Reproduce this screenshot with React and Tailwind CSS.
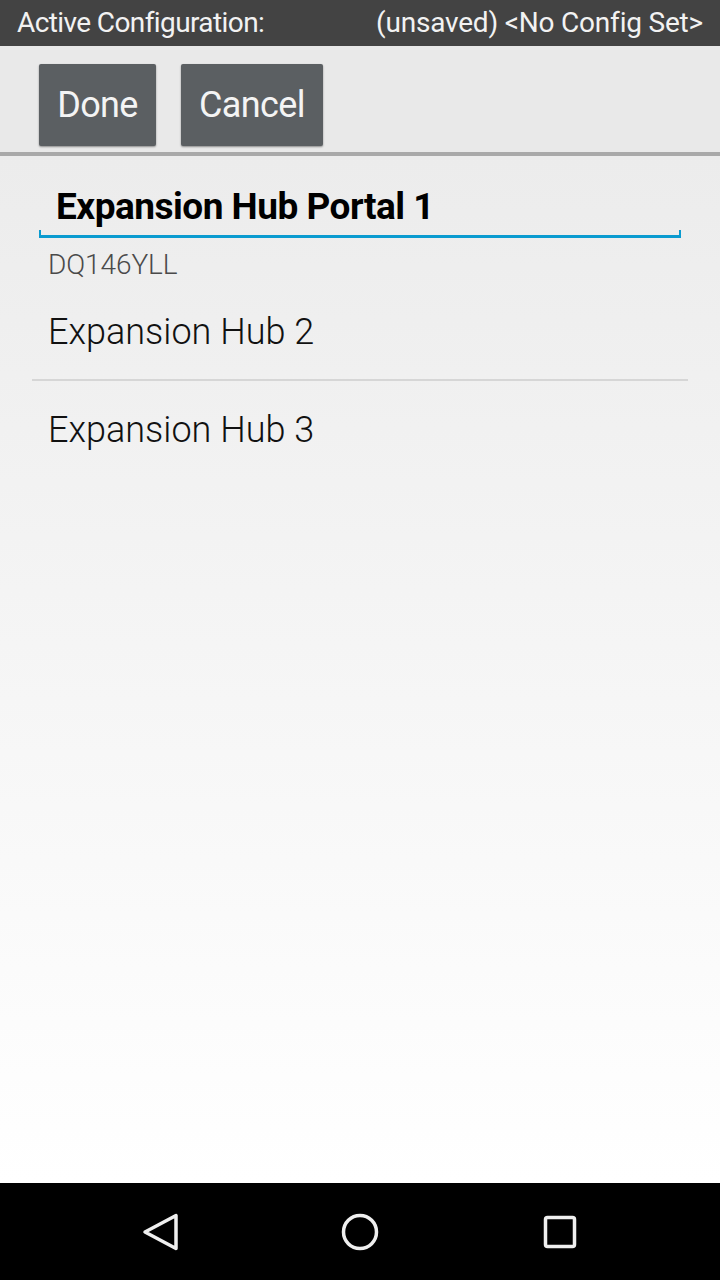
export default function App() {
  const font = { fontFamily: 'Roboto, "Noto Sans", sans-serif' };
  return (
    <div className="w-[720px] h-[1280px] flex flex-col overflow-hidden" style={font}>
      <div className="h-[46px] bg-[#434343] flex items-center justify-between pl-[17px] pr-[17px] text-[#f2f2f2] text-[28px] leading-none">
        <span className="tracking-[-0.6px]">Active Configuration:</span>
        <span className="tracking-[-0.2px]">(unsaved) &lt;No Config Set&gt;</span>
      </div>
      <div className="h-[106px] bg-[#e9e9e9] flex items-start gap-[25px] pl-[39px] pt-[18px]">
        <button className="w-[117px] h-[82px] bg-[#5b5f62] rounded-[2px] text-[#f4f4f4] text-[36px] leading-none shadow-[0_1px_2px_rgba(0,0,0,0.4)] tracking-[-0.6px]">Done</button>
        <button className="w-[142px] h-[82px] bg-[#5b5f62] rounded-[2px] text-[#f4f4f4] text-[36px] leading-none shadow-[0_1px_2px_rgba(0,0,0,0.4)] tracking-[-0.6px]">Cancel</button>
      </div>
      <div className="h-[4px] bg-[#a9a9a9]" />
      <div className="flex-1 bg-gradient-to-b from-[#ececec] to-[#ffffff] flex flex-col">
        <div className="pt-[22px] px-[39px]">
          <div className="relative h-[60px] flex items-center pl-[17px] pb-[3px]">
            <span className="text-[37px] font-bold text-black leading-none tracking-[-0.5px]">Expansion Hub Portal 1</span>
            <div className="absolute left-0 right-0 bottom-0 h-[3px] bg-[#0a9bd0]" />
            <div className="absolute left-0 bottom-0 w-[2px] h-[8px] bg-[#0a9bd0]" />
            <div className="absolute right-0 bottom-0 w-[2px] h-[8px] bg-[#0a9bd0]" />
          </div>
        </div>
        <div className="pl-[48px] pt-[13px] text-[28px] text-[#4a4a4a] leading-none font-light tracking-[-0.1px]">DQ146YLL</div>
        <div className="pl-[48px] pt-[35px] pb-[29px] text-[36px] text-[#111111] leading-none font-light tracking-[0px]">Expansion Hub 2</div>
        <div className="mx-[32px] h-[2px] bg-[#d6d6d6]" />
        <div className="pl-[48px] pt-[31px] text-[36px] text-[#111111] leading-none font-light tracking-[0px]">Expansion Hub 3</div>
      </div>
      <div className="h-[97px] bg-black flex items-center justify-center gap-[160px]">
        <svg width="40" height="40" viewBox="0 0 40 40">
          <path d="M36 3.5 L36 36.5 L5 20 Z" fill="none" stroke="#efefef" strokeWidth="3.5" strokeLinejoin="round" />
        </svg>
        <svg width="40" height="40" viewBox="0 0 40 40">
          <circle cx="20" cy="20" r="16.5" fill="none" stroke="#efefef" strokeWidth="3.5" />
        </svg>
        <svg width="40" height="40" viewBox="0 0 40 40">
          <rect x="5.5" y="5.5" width="29" height="29" rx="2" fill="none" stroke="#efefef" strokeWidth="3.5" />
        </svg>
      </div>
    </div>
  );
}
